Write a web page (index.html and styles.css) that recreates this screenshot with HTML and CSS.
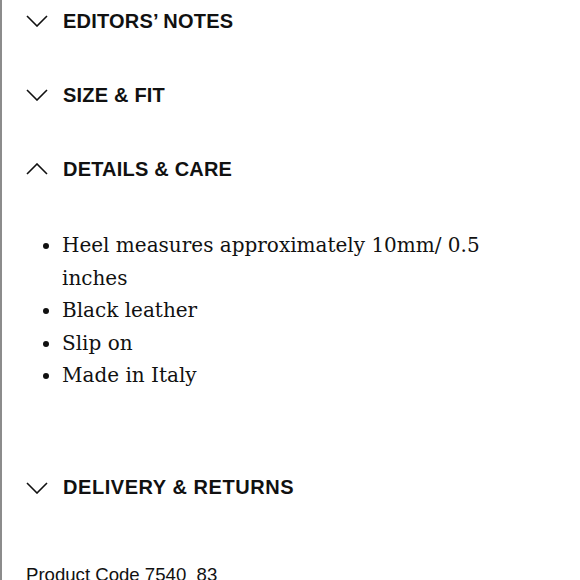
FILE: index.html
```html
<!DOCTYPE html>
<html>
<head>
<meta charset="utf-8">
<link rel="stylesheet" href="styles.css">
</head>
<body>
<div class="panel">
  <div class="acc-head">
    <svg class="chev" width="22" height="12" viewBox="0 0 22 12"><path d="M1 1 L11 11 L21 1" fill="none" stroke="#111" stroke-width="1.6"/></svg>
    <span class="acc-title">EDITORS’ NOTES</span>
  </div>
  <div class="acc-head">
    <svg class="chev" width="22" height="12" viewBox="0 0 22 12"><path d="M1 1 L11 11 L21 1" fill="none" stroke="#111" stroke-width="1.6"/></svg>
    <span class="acc-title">SIZE &amp; FIT</span>
  </div>
  <div class="acc-head">
    <svg class="chev" width="22" height="12" viewBox="0 0 22 12"><path d="M1 11 L11 1 L21 11" fill="none" stroke="#111" stroke-width="1.6"/></svg>
    <span class="acc-title">DETAILS &amp; CARE</span>
  </div>
  <ul class="details">
    <li>Heel measures approximately 10mm/ 0.5 inches</li>
    <li>Black leather</li>
    <li>Slip on</li>
    <li>Made in Italy</li>
  </ul>
  <div class="acc-head last">
    <svg class="chev" width="22" height="12" viewBox="0 0 22 12"><path d="M1 1 L11 11 L21 1" fill="none" stroke="#111" stroke-width="1.6"/></svg>
    <span class="acc-title wide">DELIVERY &amp; RETURNS</span>
  </div>
  <div class="code">Product Code 7540_83</div>
</div>
</body>
</html>
```
FILE: styles.css
```css
html, body {
  margin: 0;
  padding: 0;
  background: #fff;
}
.panel {
  height: 580px;
  overflow: hidden;
  border-left: 2px solid #8c8c8c;
  box-sizing: border-box;
  color: #111;
}
.acc-head {
  display: flex;
  align-items: center;
  height: 42px;
  padding-left: 24px;
  margin-bottom: 32px;
}
.chev {
  display: block;
  margin-right: 15px;
}
.acc-title {
  font-family: "Liberation Sans", Arial, sans-serif;
  font-weight: bold;
  font-size: 20px;
  letter-spacing: 0.2px;
}
.acc-title.wide {
  letter-spacing: 0.55px;
}
.details {
  margin: 39px 0 0 0;
  padding: 0 90px 0 60px;
  font-family: "DejaVu Serif", "Liberation Serif", serif;
  font-size: 20px;
  line-height: 32.5px;
}
.details li {
  padding-left: 0;
}
.acc-head.last {
  margin-top: 75px;
  margin-bottom: 54px;
}
.code {
  padding-left: 24px;
  font-family: "Liberation Sans", Arial, sans-serif;
  font-size: 18.6px;
  line-height: 24px;
}
```
